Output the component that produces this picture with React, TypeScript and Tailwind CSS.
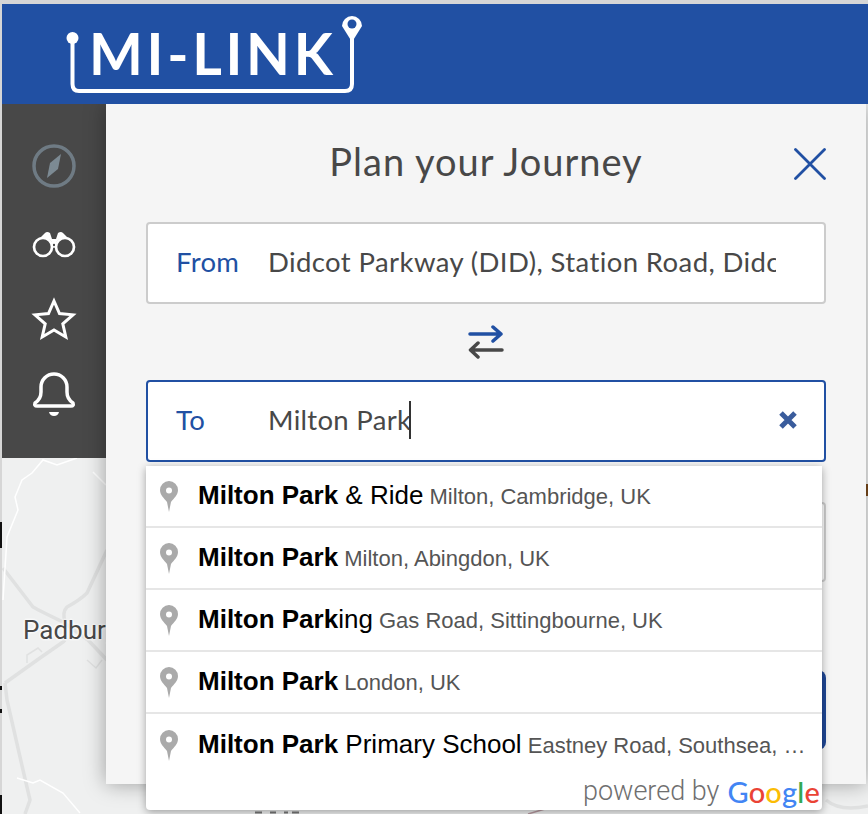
import React from "react";

const suggestions = [
  { match: "Milton Park", rest: " & Ride", place: "Milton, Cambridge, UK" },
  { match: "Milton Park", rest: "", place: "Milton, Abingdon, UK" },
  { match: "Milton Park", rest: "ing", place: "Gas Road, Sittingbourne, UK" },
  { match: "Milton Park", rest: "", place: "London, UK" },
  { match: "Milton Park", rest: " Primary School", place: "Eastney Road, Southsea, …" },
];

function MapBackground() {
  return (
    <>
      <svg className="absolute inset-0" width="868" height="814" viewBox="0 0 868 814" fill="none">
        <rect x="2" y="104" width="866" height="710" fill="#eff0f0" />
        <g stroke="#e0e1e1" strokeWidth="3.5" strokeLinejoin="round">
          <path d="M3 568 L33 607 Q40 611 63 622 L88 640 L107 660" />
          <path d="M107 550 L87 593 Q80 600 67 607 Q62 612 65 622" />
          <path d="M5 683 L40 658 L63 642 L65 640" />
          <path d="M5 683 L7 700 L23 770 L30 800 L25 814" />
          <path d="M826 800 Q840 812 868 806" />
        </g>
        <g stroke="#e0e1e1" strokeWidth="1.5">
          <path d="M27 663 L27 655 L38 648 L42 652" />
          <path d="M87 660 L96 668 L102 660" />
        </g>
        <g stroke="#ffffff" strokeWidth="1.5">
          <path d="M77 458 L57 465 L43 460 L32 473 L22 480 L15 497 L18 510 L7 537 L3 600" />
          <path d="M17 778 L33 783 L40 780 L63 793 L80 813" />
          <path d="M93 472 L106 485" />
        </g>
        <path d="M528 814 L545 809" stroke="#b79aa0" strokeWidth="1.5" />
        <path d="M255 812.500 H262 M270 812.500 H276 M284 812.500 H288 M292 812.500 H299" stroke="#777777" strokeWidth="2" />
        <rect x="866" y="484" width="2" height="12" fill="#7a4a1c" />
        <path d="M0 522 H2 V548 H0 Z M0 686 H2 V690 H0 Z M0 709 H2 V713 H0 Z M0 795 H2 V814 H0 Z" fill="#111111" />
      </svg>
      <span className="absolute left-[23px] top-[615px] whitespace-nowrap font-['Roboto',sans-serif] text-[26px] leading-[30px] text-[#484848] [text-shadow:0_0_3px_#fff,0_0_3px_#fff,0_0_3px_#fff]">
        Padbury
      </span>
    </>
  );
}

function Logo() {
  return (
    <div className="relative ml-[63px] h-[100px] w-[300px]">
      <svg className="absolute inset-0" width="300" height="100" viewBox="0 0 300 100" fill="none">
        <circle cx="7.5" cy="34" r="6" fill="#fff" />
        <path d="M7.5 36 V80 Q7.5 87 14 87 H280 Q287 87 287 80 V30" stroke="#fff" strokeWidth="4" />
        <path d="M287 38 L277 22 A10 10 0 1 1 297 22 Z" fill="#fff" />
        <circle cx="287" cy="20" r="4.5" fill="#2150a3" />
      </svg>
      <div className="pl-[24px] pt-[11px] font-['Lato',sans-serif] text-[57px] font-bold leading-[76px] tracking-[3.700px] text-white">
        MI-LINK
      </div>
    </div>
  );
}

function Sidebar() {
  return (
    <div className="relative flex h-[354px] w-[104px] shrink-0 flex-col items-center bg-[#484848] pt-[40px]">
      <svg width="44" height="44" viewBox="0 0 44 44" fill="none">
        <circle cx="22" cy="22" r="20" stroke="#6f7b84" strokeWidth="3.500" />
        <path d="M29 10 L26 25 L15 34 L18 19 Z" fill="#7c8a93" />
      </svg>
      <svg className="mt-[42px]" width="46" height="28" viewBox="0 0 46 28" fill="none">
        <circle cx="12" cy="17" r="9" stroke="#fff" strokeWidth="2.700" />
        <circle cx="34" cy="17" r="9" stroke="#fff" strokeWidth="2.700" />
        <path d="M6 11 L14 3 Q16 1 19 3 L21 9 H25 L27 3 Q30 1 32 3 L40 11 L34 8 Q27 8 25 13 H21 Q19 8 12 8 Z" fill="#fff" />
        <circle cx="23" cy="15" r="2" stroke="#fff" strokeWidth="1.500" />
      </svg>
      <svg className="mt-[39px]" width="46" height="44" viewBox="0 0 46 44" fill="none">
        <path d="M23 4 L28.500 16.500 L42 17.800 L31.800 26.800 L34.800 40 L23 33 L11.200 40 L14.200 26.800 L4 17.800 L17.500 16.500 Z" stroke="#fff" strokeWidth="3" strokeLinejoin="miter" />
      </svg>
      <svg className="mt-[31px]" width="44" height="46" viewBox="0 0 44 46" fill="none">
        <path d="M3 31 Q9 27 9 20 V15 A13 13 0 0 1 35 15 V20 Q35 27 41 31 Q42 34 39 34 H5 Q2 34 3 31 Z" stroke="#fff" strokeWidth="3.500" strokeLinejoin="round" />
        <path d="M17 40 H27 Q26 44 22 44 Q18 44 17 40 Z" fill="#fff" />
      </svg>
    </div>
  );
}

function Field({ label, active, children }: { label: string; active?: boolean; children: React.ReactNode }) {
  return (
    <div
      className={
        active
          ? "flex h-[82px] items-center rounded border-2 border-[#2150a3] bg-white pb-[2px] pl-[28px]"
          : "flex h-[82px] items-center rounded border-2 border-[#cccccc] bg-white pb-[2px] pl-[28px]"
      }
    >
      <span className="w-[92px] shrink-0 text-[27.500px] tracking-[0.3px] text-[#2150a3]">{label}</span>
      {children}
    </div>
  );
}

function Dropdown() {
  return (
    <div className="absolute left-[40px] top-[362px] z-10 w-[676px] rounded-b bg-white font-['Liberation_Sans',sans-serif] shadow-[0_2px_8px_rgba(0,0,0,0.35)]">
      {suggestions.map((s, i) => (
        <div
          key={i}
          className={
            i === 4
              ? "flex h-[62px] items-center whitespace-nowrap pl-[14px] pr-[16px]"
              : "flex h-[62px] items-center whitespace-nowrap border-b-2 border-[#e6e6e6] pl-[14px] pr-[16px]"
          }
        >
          <svg className="shrink-0" width="18" height="31" viewBox="0 0 18 31">
            <path d="M9 31 L7 21 C4 17 0 14 0 9 A9 9 0 0 1 18 9 C18 14 14 17 11 21 Z" fill="#aaaaaa" />
            <circle cx="9" cy="9.500" r="3" fill="#fff" />
          </svg>
          <div className="ml-[20px] mb-[2px] text-[22px] text-[#555555]">
            <span className="text-[26px] text-black">
              <b className="font-bold">{s.match}</b>
              {s.rest}
            </span>{" "}
            {s.place}
          </div>
        </div>
      ))}
      <div className="flex h-[34px] items-center justify-end pb-[3px] pr-[2px]">
        <span className="font-['Roboto',sans-serif] text-[27px] font-light text-[#6f6f6f]">powered by</span>
        <span className="ml-[8px] font-['Lato',sans-serif] text-[29px] font-medium tracking-[0.2px]">
          <span className="text-[#4285f4]">G</span>
          <span className="text-[#ea4335]">o</span>
          <span className="text-[#fbbc05]">o</span>
          <span className="text-[#4285f4]">g</span>
          <span className="text-[#34a853]">l</span>
          <span className="text-[#ea4335]">e</span>
        </span>
      </div>
    </div>
  );
}

function Panel() {
  return (
    <div className="relative flex h-[680px] w-[760px] shrink-0 flex-col bg-[#f5f5f5] px-[40px] font-['Lato',sans-serif] shadow-[0_0_20px_rgba(0,0,0,0.35)]">
      <div className="relative flex h-[118px] items-center justify-center pb-[3px]">
        <h1 className="text-[38px] font-normal tracking-[1px] text-[#484848]">Plan your Journey</h1>
        <svg className="absolute right-0 top-[44px]" width="32" height="32" viewBox="0 0 32 32" fill="none">
          <path d="M1.500 1.500 L30.500 30.500 M30.500 1.500 L1.500 30.500" stroke="#2150a3" strokeWidth="2.800" strokeLinecap="round" />
        </svg>
      </div>
      <Field label="From">
        <input
          readOnly
          value="Didcot Parkway (DID), Station Road, Didcot, UK"
          className="w-[508px] bg-transparent text-[27.500px] tracking-[0.4px] text-[#484848] outline-none"
        />
      </Field>
      <div className="flex h-[76px] items-center justify-center">
        <svg width="36" height="34" viewBox="0 0 36 34" fill="none" strokeWidth="3.500" strokeLinecap="round" strokeLinejoin="round">
          <path d="M2 9 H33 M25 2 L33 9 L25 16" stroke="#2150a3" />
          <path d="M34 25 H3 M10 18 L2.500 25 L10 32" stroke="#484848" />
        </svg>
      </div>
      <Field label="To" active>
        <div className="flex items-center whitespace-nowrap text-[27.500px] tracking-[0.3px] text-[#484848]">
          Milton Park
          <span className="-ml-[2px] inline-block h-[38px] w-[2px] bg-[#333333]" />
        </div>
        <svg className="ml-auto mr-[26px]" width="20" height="20" viewBox="0 0 20 20" fill="none">
          <path d="M3 3 L17 17 M17 3 L3 17" stroke="#3a5c9c" strokeWidth="5" />
        </svg>
      </Field>
      <div className="mt-[40px] h-[80px] rounded border-2 border-[#cccccc] bg-white" />
      <div className="mt-[88px] h-[80px] rounded-lg bg-[#1f4796]" />
      <Dropdown />
    </div>
  );
}

export default function App() {
  return (
    <div className="relative h-[814px] w-[868px] overflow-hidden bg-[#d6d6d6] pl-[2px] pt-[4px]">
      <MapBackground />
      <header className="relative z-10 flex h-[100px] items-center bg-[#2150a3]">
        <Logo />
      </header>
      <main className="relative flex">
        <Sidebar />
        <Panel />
      </main>
    </div>
  );
}
